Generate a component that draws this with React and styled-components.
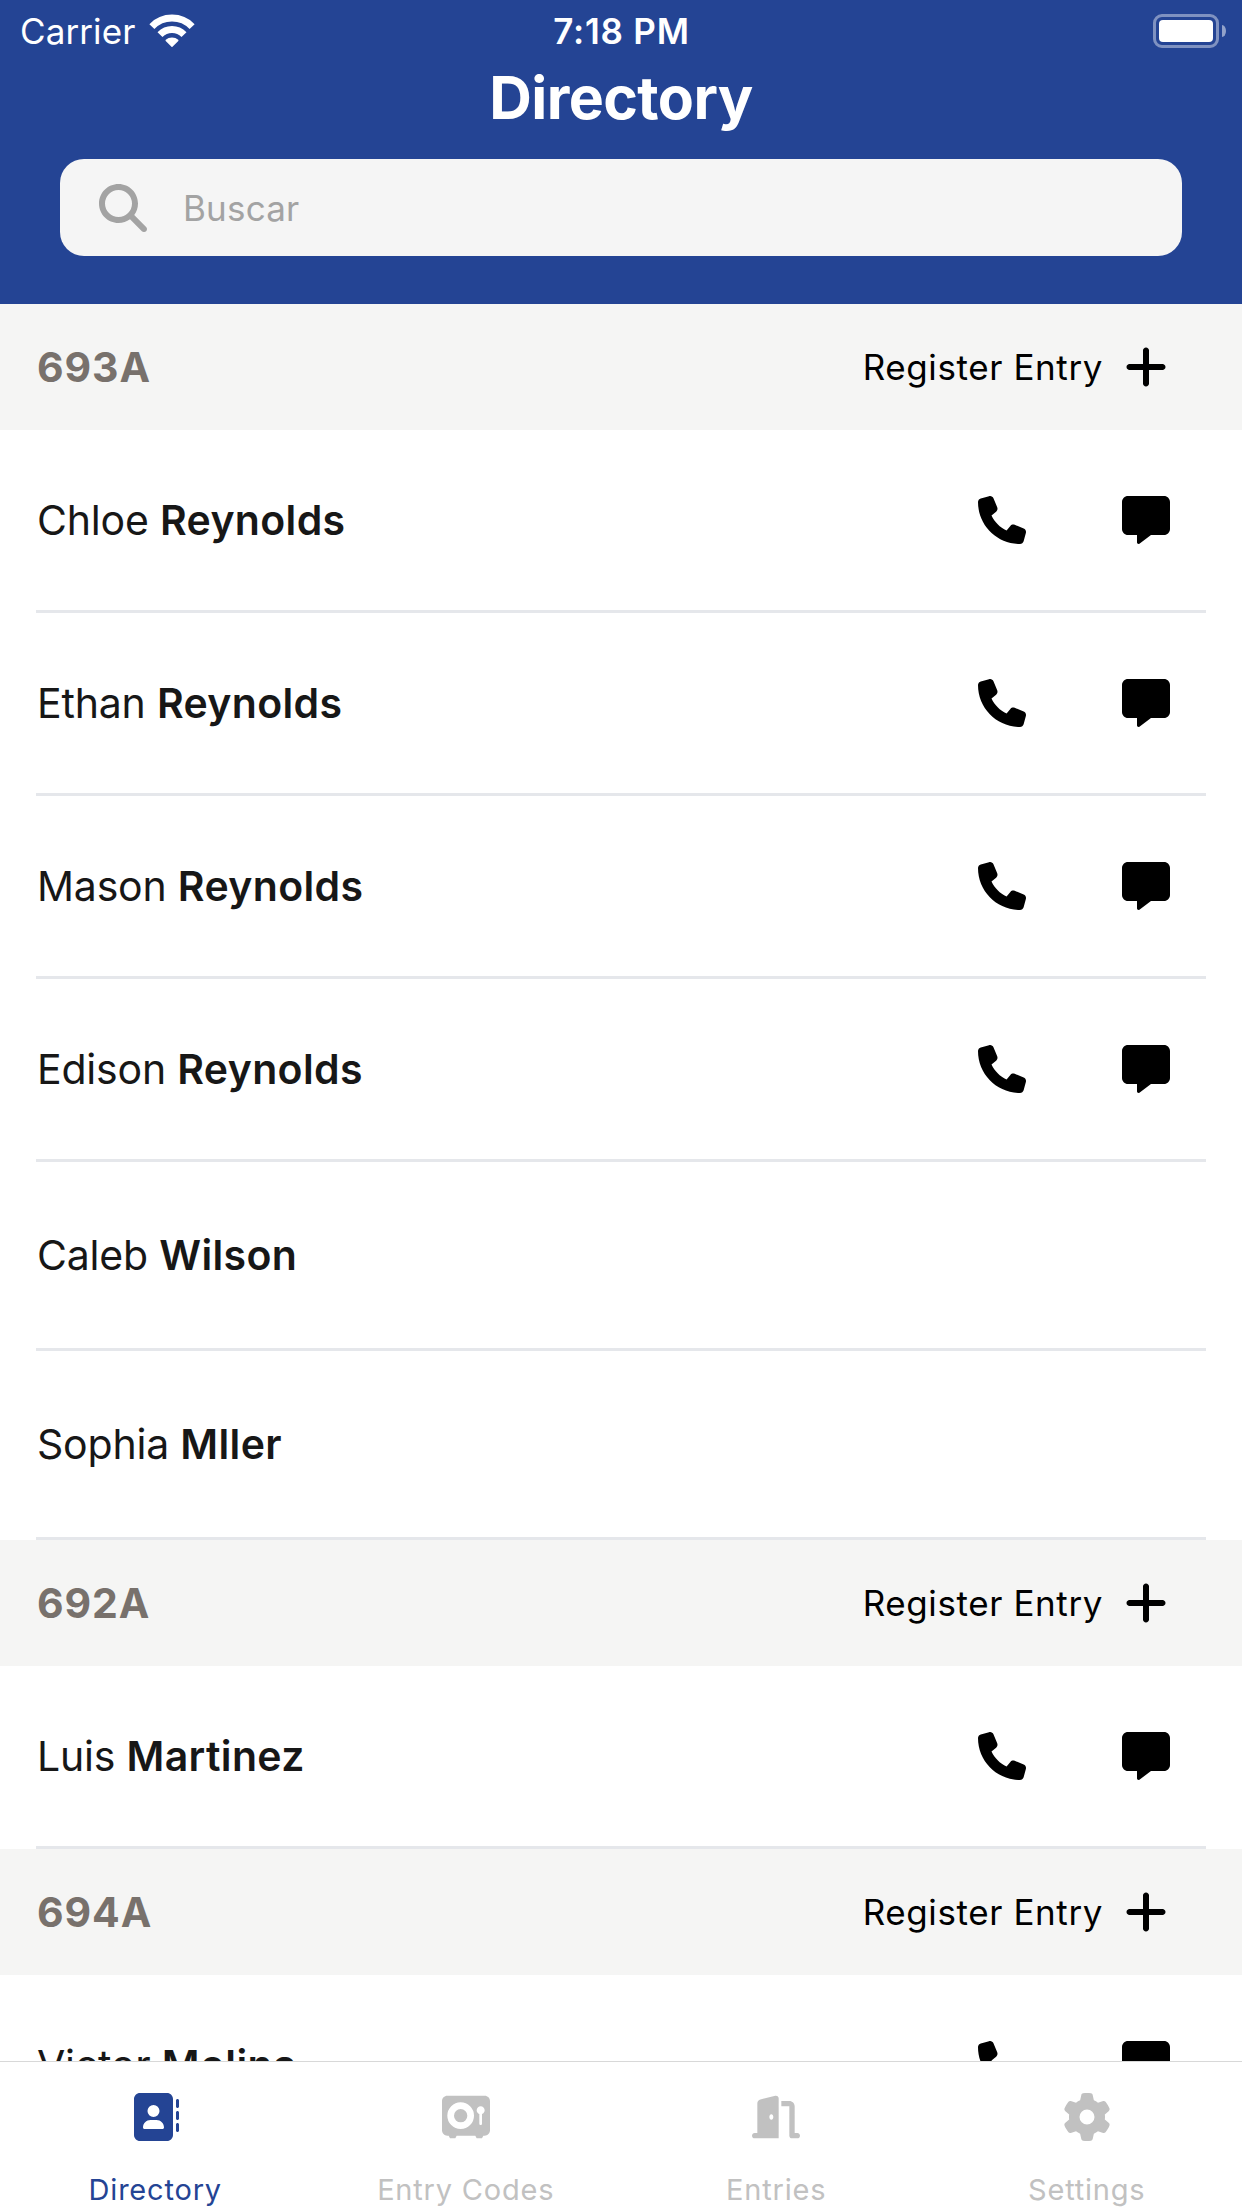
import styled, { createGlobalStyle } from "styled-components";
import {
  FaAddressBook,
  FaDoorOpen,
  FaGear,
  FaMagnifyingGlass,
  FaMessage,
  FaPhone,
  FaPlus,
  FaVault,
} from "react-icons/fa6";

const GlobalStyle = createGlobalStyle`
  * {
    box-sizing: border-box;
  }
  body {
    margin: 0;
    background-color: #fff;
    font-family: Inter, "Liberation Sans", sans-serif;
  }
  button {
    border: none;
    padding: 0;
    background: none;
    font-family: inherit;
  }
  svg {
    display: block;
    flex-shrink: 0;
  }
`;

const Screen = styled.div`
  width: 1242px;
  height: 2208px;
  display: flex;
  flex-direction: column;
  overflow: hidden;
  background-color: #fff;
`;

const Header = styled.header`
  height: 304px;
  flex-shrink: 0;
  background-color: #244494;
  color: #fff;
`;

const StatusBar = styled.div`
  height: 60px;
  padding: 2px 16px 0 20px;
  display: grid;
  grid-template-columns: 1fr auto 1fr;
  align-items: center;
  font-size: 35px;
  line-height: 58px;
`;

const Carrier = styled.div`
  display: flex;
  align-items: center;
  gap: 14px;
  letter-spacing: 0.1px;
`;

const Time = styled.span`
  padding-right: 3px;
  font-weight: 600;
  letter-spacing: 0.8px;
`;

const Battery = styled.div`
  justify-self: end;
  display: flex;
  align-items: center;
  gap: 3px;
  .shell {
    width: 66px;
    height: 34px;
    padding: 3px;
    border: 3px solid rgba(255, 255, 255, 0.42);
    border-radius: 9px;
  }
  .level {
    height: 22px;
    border-radius: 4px;
    background-color: #fff;
  }
  .cap {
    width: 4px;
    height: 12px;
    border-radius: 0 4px 4px 0 / 0 6px 6px 0;
    background-color: rgba(255, 255, 255, 0.5);
  }
`;

const Title = styled.h1`
  margin: 0;
  height: 75px;
  font-size: 59px;
  font-weight: 700;
  line-height: 75px;
  letter-spacing: -0.6px;
  text-align: center;
`;

const SearchBar = styled.label`
  margin: 24px 60px 0;
  height: 97px;
  padding: 0 39px;
  display: flex;
  align-items: center;
  gap: 36px;
  border-radius: 24px;
  background-color: #f5f5f5;
  color: #a3a3a3;
  input {
    flex: 1;
    padding: 0;
    border: none;
    outline: none;
    background: none;
    font-family: inherit;
    font-size: 35px;
    letter-spacing: 0.2px;
  }
  input::placeholder {
    color: #a3a3a3;
    opacity: 1;
  }
`;

const List = styled.main`
  flex: 1;
  min-height: 0;
  overflow: hidden;
`;

const SectionHeader = styled.div`
  height: 126px;
  padding: 0 72px 0 37px;
  display: flex;
  align-items: center;
  justify-content: space-between;
  background-color: #f5f5f4;
`;

const Unit = styled.h2`
  margin: 0;
  font-size: 41px;
  font-weight: 700;
  letter-spacing: 0.9px;
  color: #78716c;
`;

const RegisterButton = styled.button`
  display: flex;
  align-items: center;
  gap: 19px;
  font-size: 35px;
  letter-spacing: 0.6px;
  color: #000;
`;

const Row = styled.div`
  height: ${(props) => (props.$contactable ? "183px" : "189px")};
  margin: 0 36px;
  padding: 0 36px 0 1px;
  display: flex;
  align-items: center;
  justify-content: space-between;
  border-bottom: 3px solid #e5e7eb;
`;

const Name = styled.span`
  font-size: 41px;
  letter-spacing: -0.2px;
  color: #171717;
  b {
    font-weight: 600;
    letter-spacing: 0.35px;
  }
`;

const Actions = styled.div`
  display: flex;
  gap: 96px;
  color: #000;
`;

const TabBar = styled.nav`
  height: 147px;
  flex-shrink: 0;
  display: grid;
  grid-template-columns: repeat(4, 1fr);
  border-top: 1px solid #d8d8d8;
  background-color: #fff;
`;

const Tab = styled.button`
  padding-top: 31px;
  display: flex;
  flex-direction: column;
  align-items: center;
  gap: 29px;
  font-size: 29px;
  line-height: 40px;
  letter-spacing: 0.8px;
  color: ${(props) => (props.$active ? "#244494" : "#c1c1c1")};
`;

const sections = [
  {
    unit: "693A",
    people: [
      { first: "Chloe", last: "Reynolds", contactable: true },
      { first: "Ethan", last: "Reynolds", contactable: true },
      { first: "Mason", last: "Reynolds", contactable: true },
      { first: "Edison", last: "Reynolds", contactable: true },
      { first: "Caleb", last: "Wilson", contactable: false },
      { first: "Sophia", last: "Mller", contactable: false },
    ],
  },
  {
    unit: "692A",
    people: [{ first: "Luis", last: "Martinez", contactable: true }],
  },
  {
    unit: "694A",
    people: [{ first: "Victor", last: "Molina", contactable: true }],
  },
];

const tabs = [
  { label: "Directory", Icon: FaAddressBook },
  { label: "Entry Codes", Icon: FaVault },
  { label: "Entries", Icon: FaDoorOpen },
  { label: "Settings", Icon: FaGear },
];

function WifiIcon() {
  return (
    <svg width="46" height="34" viewBox="0 0 46 34" fill="none">
      <path d="M2.9 12.6A28 28 0 0 1 43.1 12.6" stroke="#fff" strokeWidth="7" />
      <path d="M11 20.6A16.9 16.9 0 0 1 35 20.6" stroke="#fff" strokeWidth="7" />
      <path
        d="M23 32.2L17.2 26.4A8.8 8.8 0 0 1 28.8 26.4Z"
        fill="#fff"
        stroke="#fff"
        strokeWidth="1.4"
        strokeLinejoin="round"
      />
    </svg>
  );
}

function Person({ first, last, contactable }) {
  return (
    <Row $contactable={contactable}>
      <Name>
        {first} <b>{last}</b>
      </Name>
      {contactable && (
        <Actions>
          <FaPhone size={48} />
          <FaMessage size={48} />
        </Actions>
      )}
    </Row>
  );
}

function Section({ unit, people }) {
  return (
    <section>
      <SectionHeader>
        <Unit>{unit}</Unit>
        <RegisterButton type="button">
          Register Entry
          <FaPlus size={48} />
        </RegisterButton>
      </SectionHeader>
      {people.map((person) => (
        <Person key={person.first} {...person} />
      ))}
    </section>
  );
}

export default function App() {
  return (
    <>
      <GlobalStyle />
      <Screen>
        <Header>
          <StatusBar>
            <Carrier>
              Carrier
              <WifiIcon />
            </Carrier>
            <Time>7:18 PM</Time>
            <Battery>
              <div className="shell">
                <div className="level" />
              </div>
              <div className="cap" />
            </Battery>
          </StatusBar>
          <Title>Directory</Title>
          <SearchBar>
            <FaMagnifyingGlass size={48} />
            <input type="text" name="search" placeholder="Buscar" />
          </SearchBar>
        </Header>
        <List>
          {sections.map((section) => (
            <Section key={section.unit} {...section} />
          ))}
        </List>
        <TabBar>
          {tabs.map(({ label, Icon }, index) => (
            <Tab key={label} type="button" $active={index === 0}>
              <Icon size={48} />
              {label}
            </Tab>
          ))}
        </TabBar>
      </Screen>
    </>
  );
}
